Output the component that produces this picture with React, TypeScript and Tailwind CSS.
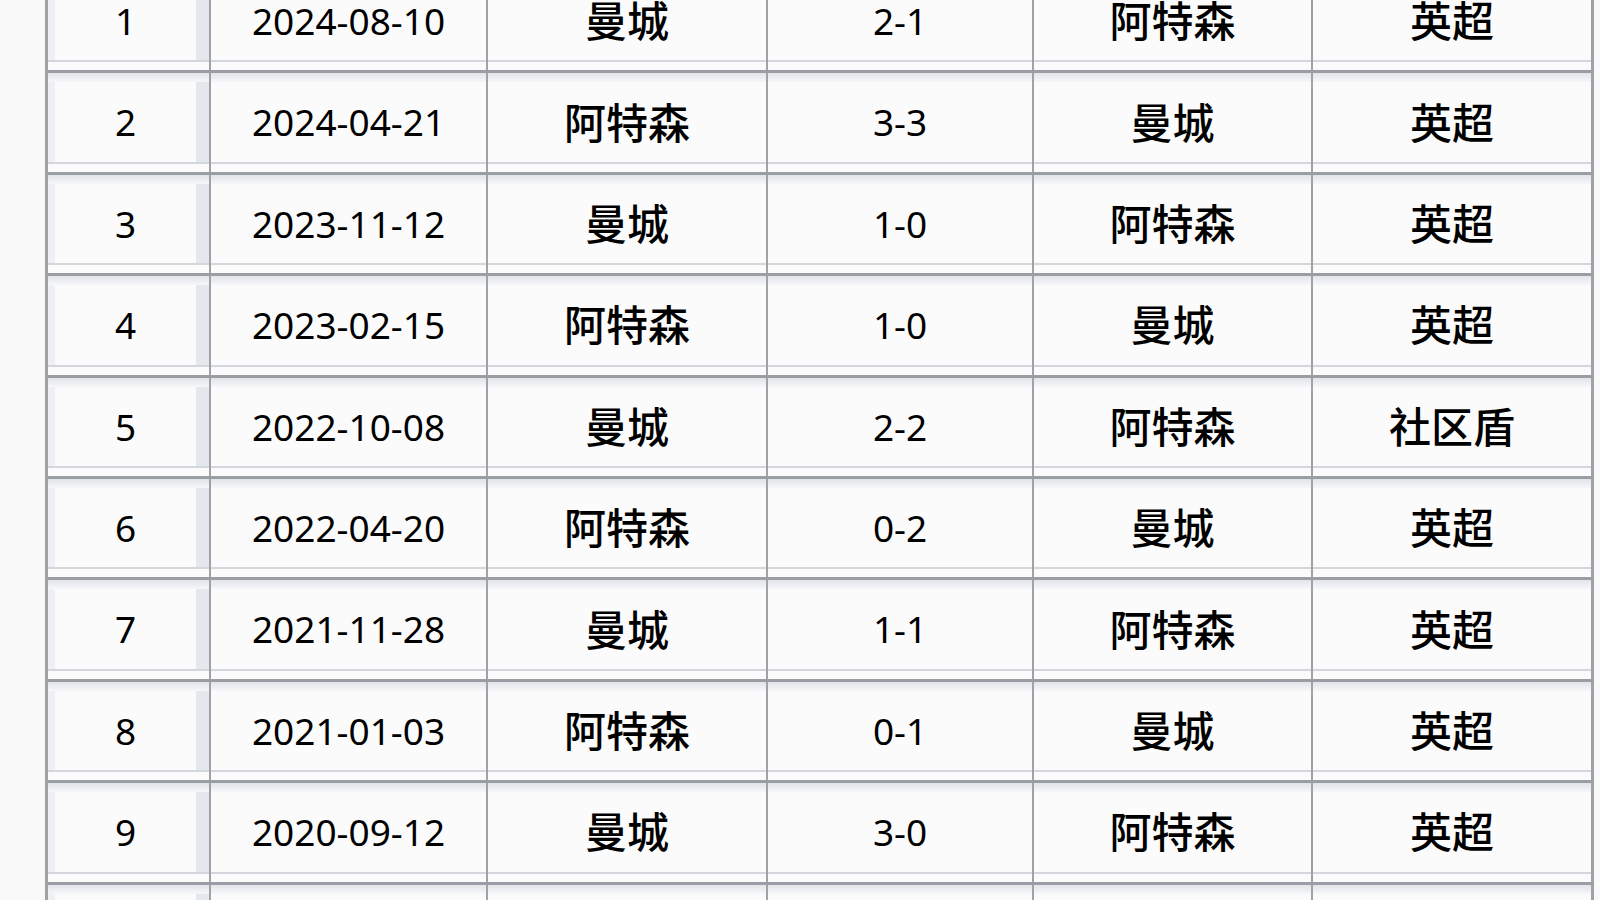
const ROWS = [
  ["1", "2024-08-10", "曼城", "2-1", "阿特森", "英超"],
  ["2", "2024-04-21", "阿特森", "3-3", "曼城", "英超"],
  ["3", "2023-11-12", "曼城", "1-0", "阿特森", "英超"],
  ["4", "2023-02-15", "阿特森", "1-0", "曼城", "英超"],
  ["5", "2022-10-08", "曼城", "2-2", "阿特森", "社区盾"],
  ["6", "2022-04-20", "阿特森", "0-2", "曼城", "英超"],
  ["7", "2021-11-28", "曼城", "1-1", "阿特森", "英超"],
  ["8", "2021-01-03", "阿特森", "0-1", "曼城", "英超"],
  ["9", "2020-09-12", "曼城", "3-0", "阿特森", "英超"],
  ["", "", "", "", "", ""],
];

const COLS = [
  { w: "w-[163px]", cjk: false },
  { w: "w-[277px]", cjk: false },
  { w: "w-[280px]", cjk: true },
  { w: "w-[266px]", cjk: false },
  { w: "w-[279px]", cjk: true },
  { w: "w-[281px]", cjk: true },
];

function Cell({ text, col }: { text: string; col: number }) {
  const c = COLS[col];
  const last = col === COLS.length - 1;
  return (
    <div
      className={`${c.w} shrink-0 flex flex-col ${
        last ? "border-r-[3px]" : "border-r-2"
      } border-[#9fa3a8]`}
    >
      <div className="h-[9px] bg-gradient-to-b from-[#e1e4e9] to-[#f6f7f9]" />
      {col === 0 ? (
        <div className="flex-1 flex">
          <div className="w-[7px] bg-[#eef0f3]" />
          <div className="flex-1 flex items-center justify-center bg-[#fbfbfb] text-[37px] font-normal">
            {text}
          </div>
          <div className="w-[13px] bg-[#e4e7ec]" />
        </div>
      ) : (
        <div
          className={`flex-1 flex items-center justify-center bg-[#fbfbfb] ${
            c.cjk ? "text-[42px] font-medium" : "text-[37px] font-normal"
          }`}
        >
          {text}
        </div>
      )}
      <div className="h-[2px] bg-[#d3d6da]" />
      <div className="h-[8px] bg-[#fbfbfb]" />
    </div>
  );
}

export default function App() {
  return (
    <div className="h-screen w-full overflow-hidden bg-[#f9f9f9] font-['Noto_Sans','Noto_Sans_CJK_SC',sans-serif] text-black">
      <div className="ml-[45px] -mt-[31px] w-[1549px] border-l-[3px] border-[#9fa3a8]">
        {ROWS.map((row, i) => (
          <div
            key={i}
            className="flex h-[101.4px] border-t-[3px] border-[#9a9ea4]"
          >
            {row.map((t, j) => (
              <Cell key={j} text={t} col={j} />
            ))}
          </div>
        ))}
      </div>
    </div>
  );
}
